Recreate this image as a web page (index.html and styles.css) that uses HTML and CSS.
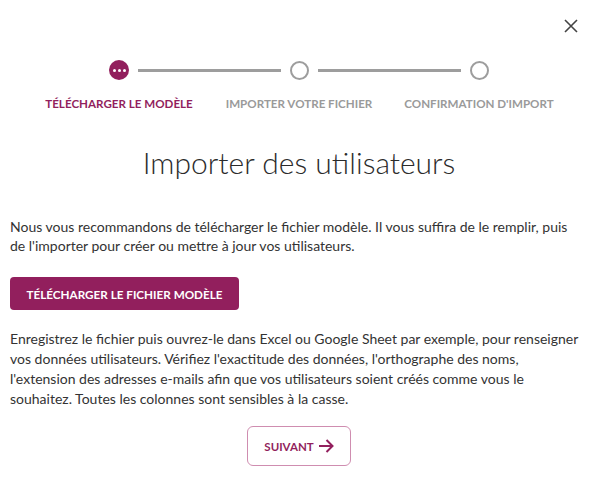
FILE: index.html
```html
<!DOCTYPE html>
<html lang="fr">
<head>
<meta charset="utf-8">
<link rel="stylesheet" href="styles.css">
</head>
<body>
<div class="modal">
  <div class="topbar">
    <button class="close" aria-label="Fermer">
      <svg width="14" height="14" viewBox="0 0 14 14"><path d="M1 1L13 13M13 1L1 13" stroke="#444" stroke-width="1.6" fill="none"/></svg>
    </button>
  </div>
  <div class="stepper">
    <span class="dot active"><i></i><i></i><i></i></span>
    <span class="line"></span>
    <span class="dot"></span>
    <span class="line"></span>
    <span class="dot"></span>
  </div>
  <div class="labels">
    <span class="label current">TÉLÉCHARGER LE MODÈLE</span>
    <span class="label">IMPORTER VOTRE FICHIER</span>
    <span class="label">CONFIRMATION D'IMPORT</span>
  </div>
  <h1 class="title">Importer des utilisateurs</h1>
  <p class="text first">Nous vous recommandons de télécharger le fichier modèle. Il vous suffira de le remplir, puis<br>de l'importer pour créer ou mettre à jour vos utilisateurs.</p>
  <button class="primary">TÉLÉCHARGER LE FICHIER MODÈLE</button>
  <p class="text second">Enregistrez le fichier puis ouvrez-le dans Excel ou Google Sheet par exemple, pour renseigner<br>vos données utilisateurs. Vérifiez l'exactitude des données, l'orthographe des noms,<br>l'extension des adresses e-mails afin que vos utilisateurs soient créés comme vous le<br>souhaitez. Toutes les colonnes sont sensibles à la casse.</p>
  <div class="footer">
    <button class="next">SUIVANT
      <svg width="16" height="14" viewBox="0 0 16 14"><path d="M1 7H14.5M8.5 1L14.5 7L8.5 13" stroke="#921f5d" stroke-width="2" fill="none"/></svg>
    </button>
  </div>
</div>
</body>
</html>
```
FILE: styles.css
```css
html, body {
  margin: 0;
  padding: 0;
  background: #fff;
}
body {
  font-family: Lato, "Open Sans", sans-serif;
  color: #333;
}
.modal {
  width: 578px;
  padding: 0 4px 0 10px;
}
.topbar {
  display: flex;
  justify-content: flex-end;
  height: 52px;
  padding-top: 19px;
  box-sizing: border-box;
}
.close {
  border: 0;
  background: none;
  padding: 0;
  margin-right: 10px;
  width: 14px;
  height: 14px;
  display: flex;
  cursor: pointer;
}
.stepper {
  width: 380px;
  margin: 8px auto 0;
  display: flex;
  align-items: center;
  height: 20px;
}
.dot {
  width: 19px;
  height: 19px;
  box-sizing: border-box;
  border: 2px solid #9d9d9d;
  border-radius: 50%;
  flex: none;
}
.dot.active {
  width: 20px;
  height: 20px;
  border: 0;
  background: #921f5d;
  display: flex;
  align-items: center;
  justify-content: center;
  gap: 2px;
}
.dot.active i {
  width: 3px;
  height: 3px;
  background: #fff;
  border-radius: 50%;
}
.line {
  flex: 1;
  height: 3px;
  background: #9d9d9d;
  margin: 0 9px;
}
.labels {
  width: 540px;
  margin: 0 auto;
  display: grid;
  grid-template-columns: repeat(3, 1fr);
  margin-top: 17px;
}
.label {
  text-align: center;
  font-size: 11.6px;
  font-weight: 700;
  color: #9a9a9a;
}
.label.current {
  color: #921f5d;
}
.title {
  margin: 34px 0 0;
  text-align: center;
  font-size: 30px;
  font-weight: 300;
  color: #2b2b2b;
  line-height: 36px;
}
.text {
  font-size: 14px;
  line-height: 20px;
  margin: 0;
  color: #333;
}
.text.first {
  margin-top: 37px;
  line-height: 19px;
}
.primary {
  margin-top: 22px;
  display: block;
  background: #921f5d;
  color: #fff;
  border: 0;
  border-radius: 4px;
  height: 33px;
  width: 229px;
  font-family: inherit;
  font-size: 11.7px;
  font-weight: 700;
  padding: 0;
  cursor: pointer;
}
.text.second {
  margin-top: 19px;
}
.footer {
  display: flex;
  justify-content: center;
  margin-top: 17px;
}
.next {
  width: 104px;
  height: 40px;
  border: 1px solid #cf8db0;
  border-radius: 6px;
  background: #fff;
  color: #921f5d;
  font-family: inherit;
  font-size: 11.5px;
  font-weight: 700;
  display: flex;
  align-items: center;
  justify-content: center;
  gap: 4px;
  padding: 0;
  cursor: pointer;
}
```
